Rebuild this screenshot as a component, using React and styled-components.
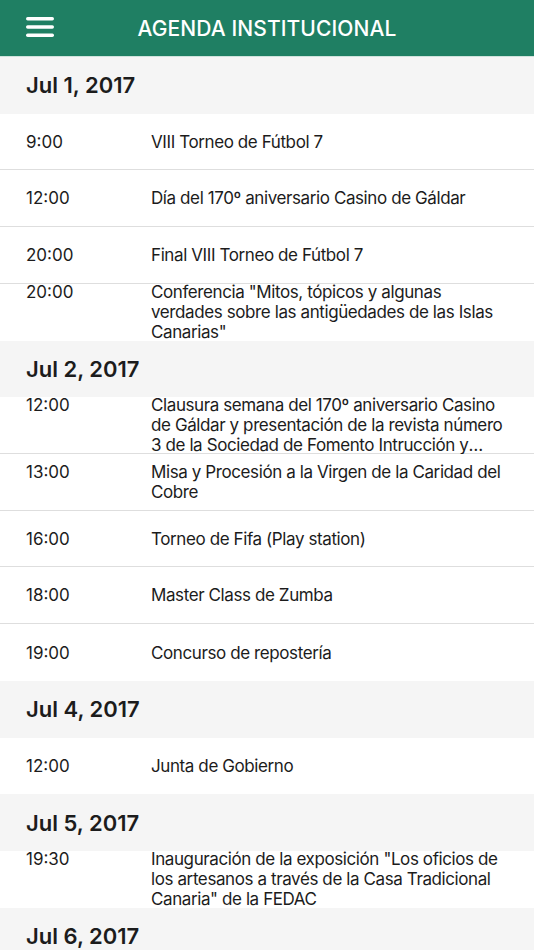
import React from 'react';
import styled, { createGlobalStyle } from 'styled-components';

const GlobalStyle = createGlobalStyle`
  html, body { margin: 0; padding: 0; background: #fff; }
  body { font-family: Inter, "Noto Sans", sans-serif; -webkit-font-smoothing: antialiased; }
  * { box-sizing: border-box; }
`;

const agenda = [
  {
    date: 'Jul 1, 2017',
    events: [
      { time: '9:00', title: 'VIII Torneo de Fútbol 7' },
      { time: '12:00', title: 'Día del 170º aniversario Casino de Gáldar' },
      { time: '20:00', title: 'Final VIII Torneo de Fútbol 7' },
      { time: '20:00', title: 'Conferencia "Mitos, tópicos y algunas verdades sobre las antigüedades de las Islas Canarias"' },
    ],
  },
  {
    date: 'Jul 2, 2017',
    events: [
      { time: '12:00', title: 'Clausura semana del 170º aniversario Casino de Gáldar y presentación de la revista número 3 de la Sociedad de Fomento Intrucción y Recreo de Gáldar' },
      { time: '13:00', title: 'Misa y Procesión a la Virgen de la Caridad del Cobre' },
      { time: '16:00', title: 'Torneo de Fifa (Play station)' },
      { time: '18:00', title: 'Master Class de Zumba' },
      { time: '19:00', title: 'Concurso de repostería' },
    ],
  },
  {
    date: 'Jul 4, 2017',
    events: [{ time: '12:00', title: 'Junta de Gobierno' }],
  },
  {
    date: 'Jul 5, 2017',
    events: [{ time: '19:30', title: 'Inauguración de la exposición "Los oficios de los artesanos a través de la Casa Tradicional Canaria" de la FEDAC' }],
  },
  {
    date: 'Jul 6, 2017',
    events: [],
  },
];

const App = () => {
  return (
    <Screen>
      <GlobalStyle />
      <NavBar>
        <MenuButton aria-label="menu">
          <svg width="28" height="20" viewBox="0 0 28 20">
            <rect x="0" y="0" width="28" height="3.4" rx="1.7" fill="#fff" />
            <rect x="0" y="8.3" width="28" height="3.4" rx="1.7" fill="#fff" />
            <rect x="0" y="16.6" width="28" height="3.4" rx="1.7" fill="#fff" />
          </svg>
        </MenuButton>
        <Title>AGENDA INSTITUCIONAL</Title>
      </NavBar>
      <List>
        {agenda.map((day) => (
          <React.Fragment key={day.date}>
            <DayHeader>{day.date}</DayHeader>
            {day.events.map((ev, i) => (
              <Row key={i} last={i === day.events.length - 1}>
                <RowInner>
                  <Time>{ev.time}</Time>
                  <EventTitle>{ev.title}</EventTitle>
                </RowInner>
              </Row>
            ))}
          </React.Fragment>
        ))}
      </List>
    </Screen>
  );
};

export default App;

const Screen = styled.div`
  width: 534px; height: 950px;
  overflow: hidden;
  background: #fff;
`;

const NavBar = styled.header`
  height: 57px;
  background: #1f7f63;
  border-bottom: 1px solid #cfe3dc;
  display: flex; align-items: center; justify-content: center;
  position: relative;
`;

const MenuButton = styled.div`
  position: absolute; left: 26px; top: 17px;
  width: 28px; height: 20px;
  display: flex;
`;

const Title = styled.h1`
  margin: 0;
  color: #fff;
  font-size: 21px; font-weight: 500;
  letter-spacing: 0.1px;
`;

const List = styled.div`
  display: flex; flex-direction: column;
`;

const DayHeader = styled.div`
  height: 56.73px;
  flex-shrink: 0;
  background: #f5f5f5;
  display: flex; align-items: center;
  padding-left: 26px;
  font-size: 22px; font-weight: 600;
  color: #1c1c1c;
  position: relative; z-index: 1;
`;

const Row = styled.div`
  height: 56.73px;
  flex-shrink: 0;
  background: #fff;
  display: flex; align-items: center;
  border-bottom: ${(p) => (p.last ? 'none' : '1px solid #dedede')};
  padding: 0 26px 0 26px;
`;

const RowInner = styled.div`
  display: flex; align-items: flex-start;
  width: 100%;
  font-size: 17px; line-height: 20px;
  letter-spacing: -0.4px;
  color: #1c1c1c;
`;

const Time = styled.div`
  width: 125px; flex-shrink: 0;
  letter-spacing: 0;
`;

const EventTitle = styled.div`
  flex: 1;
  display: -webkit-box;
  -webkit-line-clamp: 3;
  -webkit-box-orient: vertical;
  overflow: hidden;
`;
